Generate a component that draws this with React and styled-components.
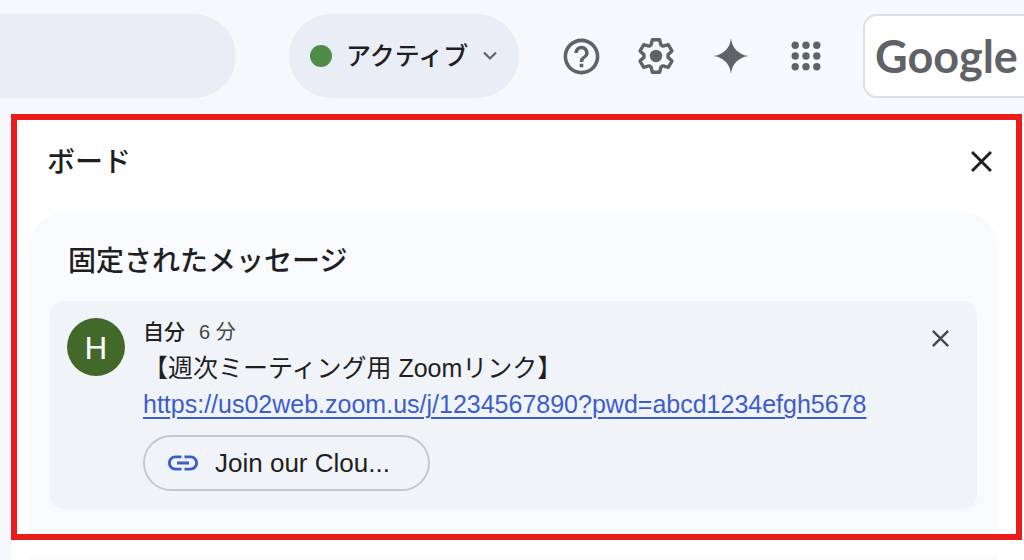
import React from "react";
import styled, { createGlobalStyle } from "styled-components";
import { MdHelpOutline, MdLink } from "react-icons/md";

const GlobalStyle = createGlobalStyle`
  * { box-sizing: border-box; }
  body {
    margin: 0;
    background: #f6f8fc;
    color: #1f1f1f;
    font-family: Roboto, "Noto Sans CJK JP", sans-serif;
  }
  button { border: 0; padding: 0; background: none; font: inherit; color: inherit; cursor: pointer; }
  h1, h2, p { margin: 0; }
  svg { display: block; flex: none; }
`;

const Header = styled.header`
  display: flex;
  align-items: center;
  padding: 14px 0 16px;
`;

const Search = styled.input`
  flex: 1;
  min-width: 0;
  height: 84px;
  margin-right: 53px;
  padding: 0 42px 0 24px;
  border: 0;
  border-radius: 0 42px 42px 0;
  background: #e9eef6;
  font-size: 24px;
`;

const StatusButton = styled.button`
  display: flex;
  align-items: center;
  width: 230px;
  height: 84px;
  margin-right: 40px;
  padding-left: 21px;
  border-radius: 42px;
  background: #e9eef6;
  font-size: 25px;
  font-weight: 500;
  line-height: 36px;
  white-space: nowrap;
`;

const StatusDot = styled.span`
  width: 22px;
  height: 22px;
  margin-right: 14px;
  border-radius: 50%;
  background: #4e8c4a;
`;

const StatusLabel = styled.span`
  margin-right: 15px;
  padding-top: 2px;
`;

const Tools = styled.nav`
  display: flex;
  gap: 31px;
  margin-right: 35px;
`;

const IconButton = styled.button`
  display: flex;
  align-items: center;
  justify-content: center;
  flex: none;
  width: ${(p) => p.$size}px;
  height: ${(p) => p.$size}px;
  color: ${(p) => p.$color};
`;

const BrandCard = styled.div`
  display: flex;
  align-items: center;
  width: 161px;
  height: 84px;
  padding-left: 10px;
  border: 2px solid #dcdfe5;
  border-right: 0;
  border-radius: 14px 0 0 14px;
  background: #fff;
  color: #5f6368;
  font-family: Lato, sans-serif;
  font-size: 45px;
  font-weight: 700;
  line-height: 60px;
`;

const Board = styled.main`
  margin-left: 11px;
  background: #fff;
`;

const Highlight = styled.section`
  margin-right: 2px;
  border: 6px solid #e81c1c;
  background: #f6f8fc;
`;

const Panel = styled.div`
  padding: 0 18px 0 12px;
  border-radius: 14px 0 0 0;
  background: #fff;
`;

const PanelHeader = styled.div`
  display: flex;
  align-items: center;
  justify-content: space-between;
  height: 82px;
  margin-bottom: 10px;
  padding-left: 18px;
`;

const Title = styled.h1`
  padding-top: 4px;
  font-size: 28px;
  font-weight: 500;
  line-height: 40px;
`;

const Pinned = styled.div`
  padding: 30px 21px 25px;
  border-radius: 36px 36px 0 0;
  background: #f8fafe;
`;

const SectionTitle = styled.h2`
  margin-bottom: 19px;
  padding-left: 18px;
  font-size: 28px;
  font-weight: 500;
  line-height: 40px;
`;

const Message = styled.article`
  display: flex;
  align-items: flex-start;
  gap: 18px;
  padding: 17px 17px 18px;
  border-radius: 14px;
  background: #f0f4f9;
`;

const Avatar = styled.div`
  flex: none;
  width: 58px;
  height: 58px;
  border-radius: 50%;
  background: #43692a;
  color: #fff;
  font-size: 32px;
  line-height: 60px;
  text-align: center;
`;

const Body = styled.div`
  flex: 1;
  min-width: 0;
  font-family: "Liberation Sans", "Noto Sans CJK JP", sans-serif;
`;

const Meta = styled.div`
  display: flex;
  align-items: center;
  gap: 14px;
  height: 24px;
  margin-bottom: 8px;
  font-size: 21px;
  font-weight: 500;
  white-space: nowrap;
`;

const Time = styled.time`
  color: #444746;
  font-size: 20px;
  font-weight: 400;
`;

const Text = styled.p`
  font-size: 25px;
  line-height: 36px;
  white-space: nowrap;
`;

const TextLink = styled.a`
  color: #3c5dd0;
  text-decoration: underline;
  text-decoration-thickness: 2px;
  text-underline-offset: 4px;
`;

const Chip = styled.button`
  display: flex;
  align-items: center;
  gap: 14px;
  width: 287px;
  height: 56px;
  margin-top: 13px;
  padding-left: 20px;
  border: 2px solid #c6c8ca;
  border-radius: 28px;
  font-size: 26px;
  white-space: nowrap;

  svg { color: #3c5dd0; }
`;

const NextCard = styled.div`
  height: 4px;
  margin: 16px 26px 0 18px;
  background: #f8fafe;
`;

const tooth = [[-5, -11], [-3.6, -16.3], [3.6, -16.3], [5, -11]];
const gearPoints = [0, 60, 120, 180, 240, 300]
  .flatMap((deg) => {
    const a = (deg * Math.PI) / 180;
    return tooth.map(([x, y]) => [
      (x * Math.cos(a) - y * Math.sin(a)).toFixed(2),
      (x * Math.sin(a) + y * Math.cos(a)).toFixed(2),
    ].join(","));
  })
  .join(" ");

const Gear = () => (
  <svg width="40" height="40" viewBox="-20 -20 40 40" aria-hidden="true">
    <polygon points={gearPoints} fill="none" stroke="currentColor" strokeWidth="3.4" strokeLinejoin="round" />
    <circle r="6.2" fill="currentColor" />
  </svg>
);

const Sparkle = () => (
  <svg width="36" height="36" viewBox="0 0 36 36" aria-hidden="true">
    <path d="M18 0C18.8 10 26 17.2 36 18 26 18.8 18.8 26 18 36 17.2 26 10 18.8 0 18 10 17.2 17.2 10 18 0Z" fill="currentColor" />
  </svg>
);

const Apps = () => (
  <svg width="30" height="30" viewBox="0 0 30 30" fill="currentColor" aria-hidden="true">
    {[4.2, 15, 25.8].map((y) => [4.2, 15, 25.8].map((x) => <circle key={`${x}-${y}`} cx={x} cy={y} r="3.7" />))}
  </svg>
);

const Cross = ({ size, weight }) => (
  <svg width={size} height={size} viewBox="0 0 20 20" aria-hidden="true">
    <path d="M1 1 19 19M19 1 1 19" stroke="currentColor" strokeWidth={weight} />
  </svg>
);

export default function App() {
  return (
    <>
      <GlobalStyle />
      <Header>
        <Search type="search" aria-label="検索" />
        <StatusButton type="button">
          <StatusDot />
          <StatusLabel>アクティブ</StatusLabel>
          <svg width="14" height="10" viewBox="0 0 14 10" aria-hidden="true">
            <path d="m1 1.5 6 6 6-6" fill="none" stroke="#5f6368" strokeWidth="2.2" />
          </svg>
        </StatusButton>
        <Tools>
          <IconButton type="button" aria-label="ヘルプ" $size={44} $color="#5f6368"><MdHelpOutline size={43} /></IconButton>
          <IconButton type="button" aria-label="設定" $size={44} $color="#5f6368"><Gear /></IconButton>
          <IconButton type="button" aria-label="Gemini" $size={44} $color="#5f6368"><Sparkle /></IconButton>
          <IconButton type="button" aria-label="アプリ" $size={44} $color="#5f6368"><Apps /></IconButton>
        </Tools>
        <BrandCard>Google</BrandCard>
      </Header>
      <Board>
        <Highlight>
          <Panel>
            <PanelHeader>
              <Title>ボード</Title>
              <IconButton type="button" aria-label="閉じる" $size={34} $color="#1f1f1f"><Cross size={21} weight={2.8} /></IconButton>
            </PanelHeader>
            <Pinned>
              <SectionTitle>固定されたメッセージ</SectionTitle>
              <Message>
                <Avatar>H</Avatar>
                <Body>
                  <Meta>自分<Time>6 分</Time></Meta>
                  <Text>【週次ミーティング用 Zoomリンク】</Text>
                  <Text>
                    <TextLink href="https://us02web.zoom.us/j/1234567890?pwd=abcd1234efgh5678">
                      https://us02web.zoom.us/j/1234567890?pwd=abcd1234efgh5678
                    </TextLink>
                  </Text>
                  <Chip type="button"><MdLink size={36} />Join our Clou...</Chip>
                </Body>
                <IconButton type="button" aria-label="固定を解除" $size={40} $color="#444746"><Cross size={17} weight={2.8} /></IconButton>
              </Message>
            </Pinned>
          </Panel>
        </Highlight>
        <NextCard />
      </Board>
    </>
  );
}
